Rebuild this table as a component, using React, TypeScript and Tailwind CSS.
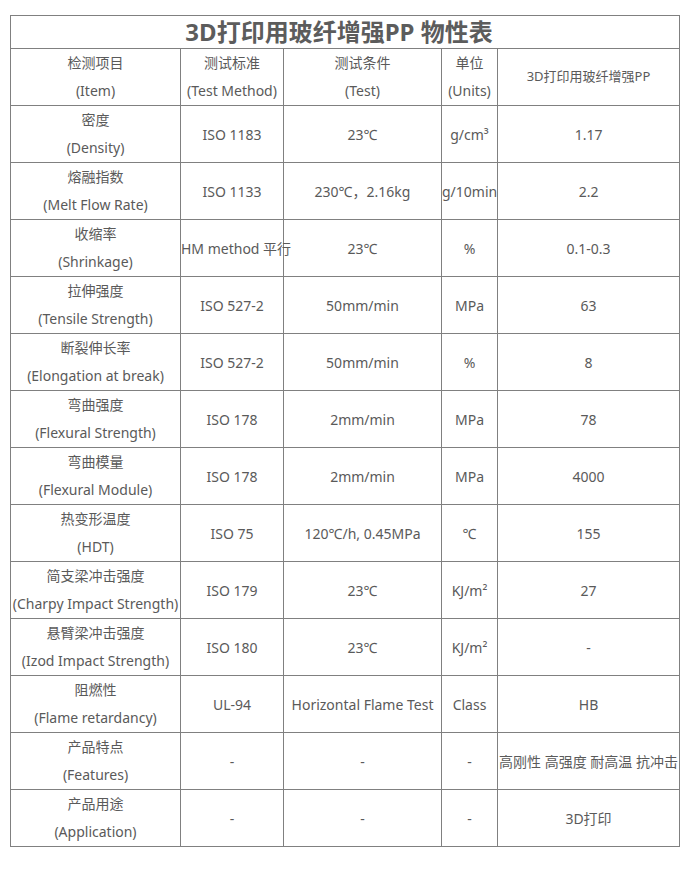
const rows: [string, string, string, string, string, string][] = [
  ['密度', '(Density)', 'ISO 1183', '23℃', 'g/cm³', '1.17'],
  ['熔融指数', '(Melt Flow Rate)', 'ISO 1133', '230℃，2.16kg', 'g/10min', '2.2'],
  ['收缩率', '(Shrinkage)', 'HM method 平行', '23℃', '%', '0.1-0.3'],
  ['拉伸强度', '(Tensile Strength)', 'ISO 527-2', '50mm/min', 'MPa', '63'],
  ['断裂伸长率', '(Elongation at break)', 'ISO 527-2', '50mm/min', '%', '8'],
  ['弯曲强度', '(Flexural Strength)', 'ISO 178', '2mm/min', 'MPa', '78'],
  ['弯曲模量', '(Flexural Module)', 'ISO 178', '2mm/min', 'MPa', '4000'],
  ['热变形温度', '(HDT)', 'ISO 75', '120℃/h, 0.45MPa', '℃', '155'],
  ['简支梁冲击强度', '(Charpy Impact Strength)', 'ISO 179', '23℃', 'KJ/m²', '27'],
  ['悬臂梁冲击强度', '(Izod Impact Strength)', 'ISO 180', '23℃', 'KJ/m²', '-'],
  ['阻燃性', '(Flame retardancy)', 'UL-94', 'Horizontal Flame Test', 'Class', 'HB'],
  ['产品特点', '(Features)', '-', '-', '-', '高刚性 高强度 耐高温 抗冲击'],
  ['产品用途', '(Application)', '-', '-', '-', '3D打印'],
]

const cell = 'border border-[#808080] p-0 text-center align-middle whitespace-nowrap'

function Two({ a, b }: { a: string; b: string }) {
  return (
    <>
      <div className="leading-[28px]">{a}</div>
      <div className="leading-[28px]">{b}</div>
    </>
  )
}

export default function App() {
  return (
    <div
      className="bg-white w-[694px] h-[871px] pt-[15px] pl-[10px] text-[#5a5a5a] text-[14px]"
      style={{ fontFamily: '"Noto Sans", "Noto Sans CJK SC", sans-serif' }}
    >
      <table className="border-collapse table-fixed w-[669px]">
        <colgroup>
          <col className="w-[170px]" />
          <col className="w-[103px]" />
          <col className="w-[158px]" />
          <col className="w-[56px]" />
          <col className="w-[182px]" />
        </colgroup>
        <tbody>
          <tr className="h-[33px]">
            <td colSpan={5} className={`${cell} text-[24px] font-bold leading-[32px] text-[#5c5c5c]`}>
              <span className="pr-[12px]">3D打印用玻纤增强PP 物性表</span>
            </td>
          </tr>
          <tr className="h-[57px]">
            <td className={cell}><Two a="检测项目" b="(Item)" /></td>
            <td className={cell}><Two a="测试标准" b="(Test Method)" /></td>
            <td className={cell}><Two a="测试条件" b="(Test)" /></td>
            <td className={cell}><Two a="单位" b="(Units)" /></td>
            <td className={`${cell} text-[13px]`}>3D打印用玻纤增强PP</td>
          </tr>
          {rows.map((r) => (
            <tr key={r[0]} className="h-[57px]">
              <td className={cell}><Two a={r[0]} b={r[1]} /></td>
              <td className={cell}>{r[2]}</td>
              <td className={cell}>{r[3]}</td>
              <td className={cell}>{r[4]}</td>
              <td className={cell}>{r[5]}</td>
            </tr>
          ))}
        </tbody>
      </table>
    </div>
  )
}
